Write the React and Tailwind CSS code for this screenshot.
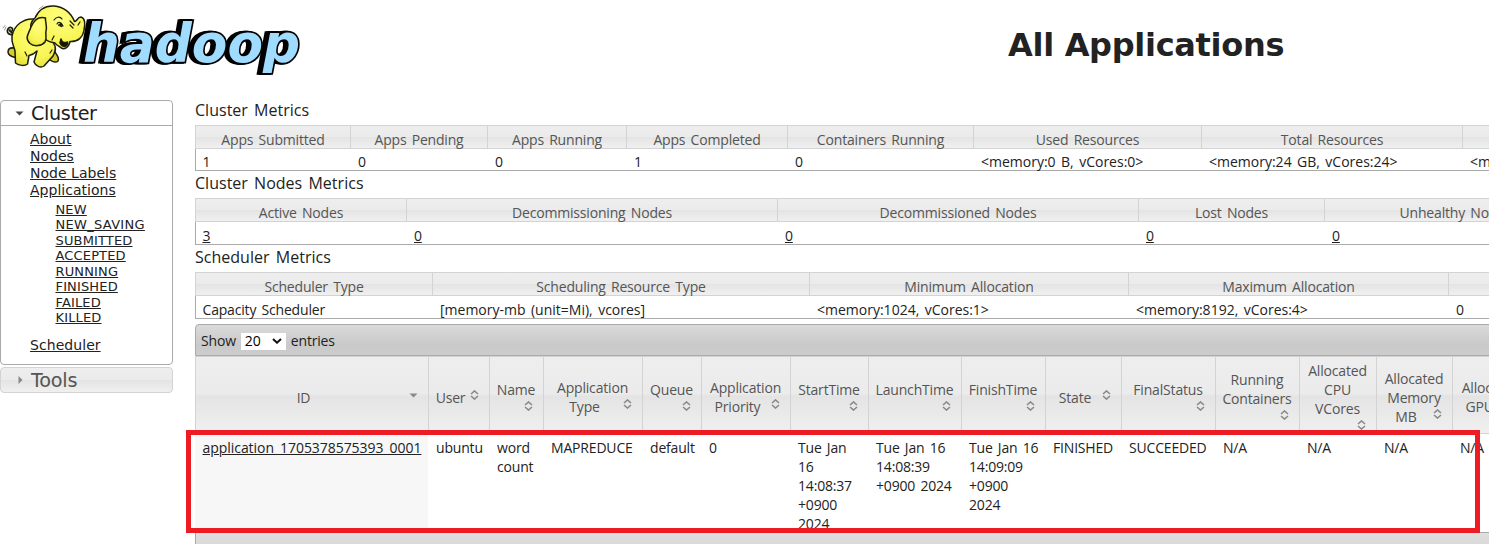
import React from "react";

const glass = "bg-[linear-gradient(to_bottom,#eeeeee_0%,#ebebeb_48%,#e4e4e4_52%,#f0f0f0_100%)]";
const bar = "bg-[linear-gradient(to_bottom,#dadada_0%,#cdcdcd_50%,#c9c9c9_70%,#cdcdcd_100%)]";

function Logo() {
  return (
    <svg width="310" height="84" viewBox="0 0 310 84" className="block shrink-0">
      <defs>
        <radialGradient id="skin" cx="0.55" cy="0.3" r="0.8">
          <stop offset="0" stopColor="#ffff80" />
          <stop offset="0.65" stopColor="#f8f555" />
          <stop offset="1" stopColor="#dfd935" />
        </radialGradient>
      </defs>
      <text
        x="83"
        y="62"
        fontSize="54"
        textLength="217"
        lengthAdjust="spacingAndGlyphs"
        fill="#9fdcff"
        stroke="#000"
        strokeWidth="3.500"
        strokeLinejoin="miter"
        paintOrder="stroke"
        className="font-['DejaVu_Sans',sans-serif] font-bold italic tracking-normal [word-spacing:0px] [filter:drop-shadow(-2px_0.5px_0_#000)_drop-shadow(-2px_0px_0_#000)]"
      >
        hadoop
      </text>
      <g stroke="#1d1d08" strokeWidth="1.500" strokeLinejoin="round" strokeLinecap="round">
        <path d="M14 34C10 36 6 33 8 29C10 26 14 28 12 31M14 34C12 32 9 32 10 30" fill="none" strokeWidth="1.800" />
        <path d="M14 48C7 47 6 54 12 56.500L17 58L20 49ZM48 49L54 50C56 55 60 57 58 61C56 63 53 62 50 60L46 54Z" fill="#d3cd2d" />
        <path d="M34 19C24 18 14 25 12 36C11 43 14 46 15 51L15.500 63C19 66 25 66 27.500 64L29 55.500C32 55 34 54 37 51L34 62C36 67 41 68 44 66L53 56C55 52 56 50 55 46L40 18Z" fill="url(#skin)" />
        <path d="M35 18C39 9 46 5.500 54 6C64 7 71 13 74.500 21.500C77 22 77 17 81 17C85 18 85.500 24 84 30C83 37 78 42 70 41.500C69 47 64 51 60 47C58 46 56 45 55 43C51 42 46 42 44 37L32 34C29 27 31 21 35 18Z" fill="url(#skin)" />
        <path d="M45.500 18C38 16 34 20 31 27C29 33 24 38 30 43.500C34 47 42 46 45 42C47.500 38 45 34 46 31C47.500 26 45 22 45.500 18Z" fill="url(#skin)" />
        <path d="M61 39C62 43 65 43 67.500 42C68 46 63 49 60 43Z" fill="#15150a" />
        <path d="M54 20C56 17 60 16 62 19M57 24C58 21.500 61 21.500 63 26M70 21L74 25M70 25L73 28M80 22L78 25M52 40L54 36M27 56L25 52M52 50L50 53" fill="none" strokeWidth="1.200" />
        <path d="M58.500 25L61 23L62 26.500Z" fill="#15150a" strokeWidth="1" />
        <path d="M39 9L43 6M3 28L5 25.500M4.500 30L6 27" fill="none" stroke="#888" strokeWidth="0.900" />
      </g>
    </svg>
  );
}

const subStates = ["NEW", "NEW_SAVING", "SUBMITTED", "ACCEPTED", "RUNNING", "FINISHED", "FAILED", "KILLED"];

function Sidebar() {
  return (
    <nav className="w-[173px] shrink-0 font-['DejaVu_Sans',sans-serif] text-[#222] [word-spacing:0px]">
      <div className="h-[265px] rounded-[4px] border border-[#aaa]">
        <div className="flex h-[25px] items-center border-b border-[#aaa] pl-[14px] text-[19.200px] tracking-[-0.350px] text-[#212121]">
          <svg width="9" height="5" viewBox="0 0 9 5" className="mr-[7px]"><path d="M0.500 0.500H8.500L4.500 4.500Z" fill="#454545" /></svg>
          <span className="pt-[2px]">Cluster</span>
        </div>
        <ul className="pt-[5px] pl-[29px] text-[14px] leading-[17px] tracking-[0.020px] underline">
          <li>About</li>
          <li>Nodes</li>
          <li>Node Labels</li>
          <li>Applications</li>
        </ul>
        <ul className="pt-[3px] pl-[54.500px] text-[13px] leading-[15.450px] tracking-[0.150px] underline">
          {subStates.map((s) => <li key={s} className={s.includes("_") ? "tracking-[0.300px]" : ""}>{s}</li>)}
        </ul>
        <div className="pt-[11px] pl-[29px] text-[14px] leading-[17px] tracking-[0.060px] underline">Scheduler</div>
      </div>
      <div className={`mt-[2px] flex h-[26px] items-center rounded-[4px] border border-[#d3d3d3] pl-[17px] text-[19.200px] tracking-[-0.200px] text-[#555] ${glass}`}>
        <svg width="5" height="8" viewBox="0 0 5 8" className="mr-[8px]"><path d="M0.500 0L4.500 4L0.500 8Z" fill="#888" /></svg>
        <span className="pt-[2px]">Tools</span>
      </div>
    </nav>
  );
}

const clusterCols = [
  ["w-[155px]", "Apps Submitted", "1"],
  ["w-[137px]", "Apps Pending", "0"],
  ["w-[139px]", "Apps Running", "0"],
  ["w-[161px]", "Apps Completed", "1"],
  ["w-[186px]", "Containers Running", "0"],
  ["w-[228px]", "Used Resources", "<memory:0 B, vCores:0>"],
  ["w-[261px]", "Total Resources", "<memory:24 GB, vCores:24>"],
  ["w-[261px]", "", "<memory:0 B, vCores:0>"],
];
const nodeCols = [
  ["w-[211px]", "Active Nodes", "3"],
  ["w-[371px]", "Decommissioning Nodes", "0"],
  ["w-[361px]", "Decommissioned Nodes", "0"],
  ["w-[186px]", "Lost Nodes", "0"],
  ["w-[262px]", "Unhealthy Nodes", "0"],
];
const schedulerCols = [
  ["w-[237px]", "Scheduler Type", "Capacity Scheduler"],
  ["w-[377px]", "Scheduling Resource Type", "[memory-mb (unit=Mi), vcores]"],
  ["w-[319px]", "Minimum Allocation", "<memory:1024, vCores:1>"],
  ["w-[320px]", "Maximum Allocation", "<memory:8192, vCores:4>"],
  ["w-[450px]", "", "0"],
];

function Metrics({ title, cols, link, titleClass, rowClass }) {
  return (
    <section>
      <h2 className={`text-[16px] tracking-[0.020px] [word-spacing:2px] ${titleClass}`}>{title}</h2>
      <div className="flex border-b border-[#aaa]">
        {cols.map(([w, head, value], i) => (
          <div key={i} className={`shrink-0 ${w}`}>
            <div className={`h-[24px] border-y border-l border-[#d3d3d3] pt-[4px] text-center leading-[19px] text-[#555] ${glass}`}>{head}</div>
            <div className={`${rowClass} ${i === 0 ? "border-l border-[#aaa] pl-[6.500px]" : "pl-[8px]"} ${link ? "underline" : ""} ${/^[<[]/.test(value) ? "tracking-[0.000px]" : ""}`}>{value}</div>
          </div>
        ))}
      </div>
    </section>
  );
}

function SortIcon({ active }) {
  return active ? (
    <svg width="9" height="10" viewBox="0 0 9 10"><path d="M0.500 3.500H8.500L4.500 7.500Z" fill="#888" /></svg>
  ) : (
    <svg width="9" height="10" viewBox="0 0 9 10" fill="none" stroke="#888" strokeWidth="1.500"><path d="M1 4L4.500 0.900L8 4M1 6L4.500 9.100L8 6" /></svg>
  );
}

/* width, heading lines, top padding, icon top margin, icon shares the last line, cell text */
const appCols = [
  ["w-[233px]", ["ID"], "pt-[31px]", "-mt-[17px]", true, ["application_1705378575393_0001"]],
  ["w-[61px]", ["User"], "pt-[31px]", "-mt-[17px]", true, ["ubuntu"]],
  ["w-[54px]", ["Name"], "pt-[23px]", "mt-[2px]", false, ["word", "count"]],
  ["w-[99px]", ["Application", "Type"], "pt-[21px]", "-mt-[17px]", true, ["MAPREDUCE"]],
  ["w-[59px]", ["Queue"], "pt-[23px]", "mt-[2px]", false, ["default"]],
  ["w-[89px]", ["Application", "Priority"], "pt-[21px]", "-mt-[17px]", true, ["0"]],
  ["w-[78px]", ["StartTime"], "pt-[23px]", "mt-[2px]", false, ["Tue Jan", "16", "14:08:37", "+0900", "2024"]],
  ["w-[93px]", ["LaunchTime"], "pt-[23px]", "mt-[2px]", false, ["Tue Jan 16", "14:08:39", "+0900 2024"]],
  ["w-[84px]", ["FinishTime"], "pt-[23px]", "mt-[2px]", false, ["Tue Jan 16", "14:09:09", "+0900", "2024"]],
  ["w-[76px]", ["State"], "pt-[31px]", "-mt-[17px]", true, ["FINISHED"]],
  ["w-[94px]", ["FinalStatus"], "pt-[23px]", "mt-[2px]", false, ["SUCCEEDED"]],
  ["w-[84px]", ["Running", "Containers"], "pt-[13px]", "mt-[2px]", false, ["N/A"]],
  ["w-[77px]", ["Allocated", "CPU", "VCores"], "pt-[4px]", "mt-[2px]", false, ["N/A"]],
  ["w-[76px]", ["Allocated", "Memory", "MB"], "pt-[12px]", "-mt-[17px]", true, ["N/A"]],
  ["w-[78px]", ["Allocated", "GPUs"], "pt-[21px]", "-mt-[17px]", true, ["N/A"]],
];

function Applications() {
  return (
    <section className="mt-[5px]">
      <div className={`flex h-[32px] w-[1400px] items-center rounded-tl-[4px] border border-[#aaa] pt-[2px] pl-[5px] ${bar}`}>
        <span className="-mt-px">Show</span>
        <span className="ml-[5px] flex h-[17px] w-[45px] items-center justify-between bg-white pr-[4px] pl-[4px] text-black">
          <span className="-mt-px">20</span>
          <svg width="10" height="6" viewBox="0 0 10 6" fill="none" stroke="#111" strokeWidth="2"><path d="M1 1L5 4.700L9 1" /></svg>
        </span>
        <span className="-mt-px ml-[5px]">entries</span>
      </div>
      <div className="flex">
        {appCols.map(([w, lines, top, iconTop, shared], i) => (
          <div key={i} className={`flex h-[78px] shrink-0 flex-col border-y border-l border-[#d3d3d3] text-center leading-[19px] text-[#555] ${w} ${top} ${glass}`}>
            {lines.map((line, j) => (
              <span key={j} className={`block w-full whitespace-nowrap ${shared && j === lines.length - 1 ? "pr-[17px]" : "pr-px"}`}>{line}</span>
            ))}
            <span className={`mr-[10.500px] self-end leading-[19px] ${iconTop}`}><SortIcon active={i === 0} /></span>
          </div>
        ))}
      </div>
      <div className="flex h-[98px] overflow-hidden">
        {appCols.map(([w, , , , , cell], i) => (
          <div key={i} className={`shrink-0 pt-[4px] leading-[19px] whitespace-nowrap ${w} ${i === 0 ? "bg-[#f7f7f7] pl-[7.500px] tracking-[-0.050px] underline" : "pl-[8px]"}`}>
            {cell.map((line, j) => <div key={j}>{line}</div>)}
          </div>
        ))}
      </div>
      <div className="h-[32px] w-[1400px] border border-[#aaa] bg-[linear-gradient(to_bottom,#e0e0e0,#cccccc)]" />
    </section>
  );
}

export default function App() {
  return (
    <div className="relative h-[544px] w-[1489px] overflow-hidden bg-white font-['Open_Sans','Noto_Sans',sans-serif] text-[14px] tracking-[-0.180px] text-[#222] [word-spacing:1.800px]">
      <header className="flex h-[100px] items-start">
        <Logo />
        <h1 className="ml-[698px] pt-[23px] font-['DejaVu_Sans',sans-serif] text-[32px] leading-[44px] font-bold tracking-[-0.300px] whitespace-nowrap [word-spacing:0px]">All Applications</h1>
      </header>
      <div className="flex">
        <Sidebar />
        <main className="ml-[22px] min-w-0 flex-1 overflow-hidden whitespace-nowrap">
          <Metrics title="Cluster Metrics" cols={clusterCols} titleClass="h-[25px] leading-[21px]" rowClass="h-[21px] leading-[25px]" />
          <Metrics title="Cluster Nodes Metrics" cols={nodeCols} link titleClass="h-[27px] leading-[24px]" rowClass="h-[22px] leading-[27px]" />
          <Metrics title="Scheduler Metrics" cols={schedulerCols} titleClass="h-[27px] leading-[24px]" rowClass="h-[22px] leading-[27px]" />
          <Applications />
        </main>
      </div>
      <div className="pointer-events-none absolute top-[430px] left-[186px] h-[103px] w-[1294px] border-[5px] border-[#ed1c24]" />
    </div>
  );
}
